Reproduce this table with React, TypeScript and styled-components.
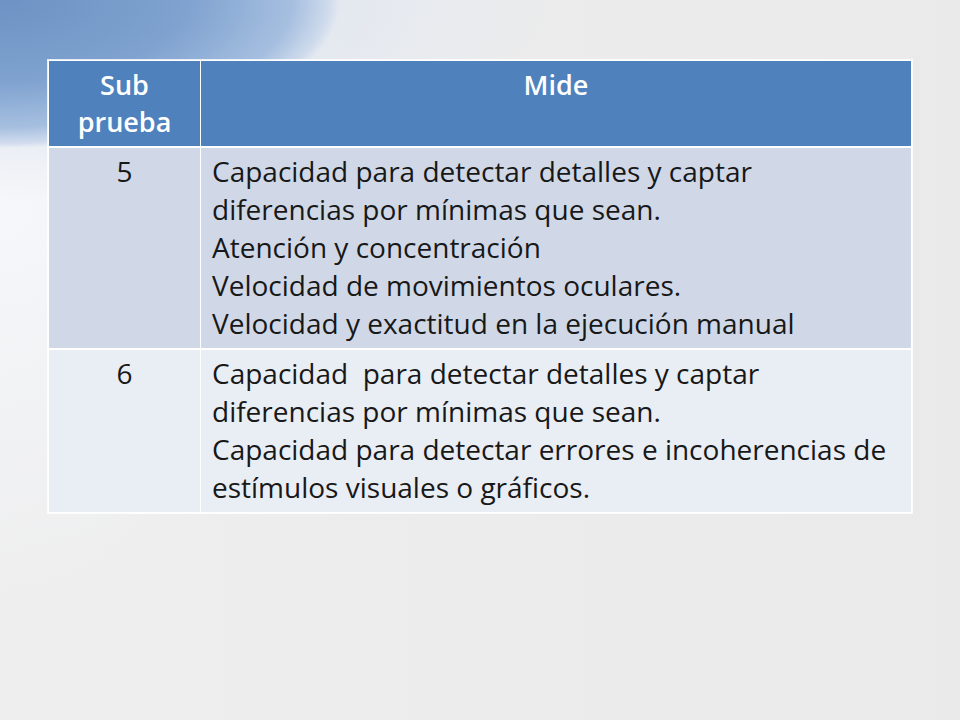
import React from "react";
import styled, { createGlobalStyle } from "styled-components";

const Global = createGlobalStyle`
  html, body { margin: 0; padding: 0; }
  body { width: 960px; height: 720px; overflow: hidden; }
`;

const Slide = styled.div`
  width: 960px;
  height: 720px;
  box-sizing: border-box;
  padding: 60px 48px 0 48px;
  font-family: "Open Sans", Lato, sans-serif;
  background:
    radial-gradient(ellipse 340px 148px at 0 0, #6d93c4 0%, #7fa2cf 55%, #a6bfe0 86%, rgba(200,214,235,0.7) 97%, rgba(240,242,246,0) 100%),
    radial-gradient(ellipse 560px 200px at 0 0, rgba(210,222,238,0.9) 0%, rgba(226,232,242,0.6) 70%, rgba(236,236,236,0) 100%),
    radial-gradient(ellipse 360px 420px at 0 200px, #f6f7fa 0%, rgba(243,244,247,0.7) 50%, rgba(236,236,236,0) 100%),
    linear-gradient(90deg, #eeeeee 0%, #eaeaea 100%);
  background-color: #ececec;
`;

const Table = styled.table`
  width: 864px;
  border-collapse: collapse;
  table-layout: fixed;
  outline: 1px solid rgba(255,255,255,0.8);
`;

const FirstCol = styled.col`
  width: 152px;
`;

const HeadCell = styled.th`
  background: #4f81bd;
  color: #ffffff;
  font-weight: 600;
  font-size: 27px;
  line-height: 37px;
  text-align: center;
  vertical-align: top;
  padding: 5px 4px 6px;
  height: 74px;
  border: 1px solid #ffffff;
`;

const Row = styled.tr<{ $alt?: boolean }>`
  background: ${(p) => (p.$alt ? "#e9edf4" : "#d0d8e8")};
`;

const NumCell = styled.td`
  font-size: 28px;
  line-height: 38px;
  color: #181818;
  text-align: center;
  vertical-align: top;
  padding: 4px 8px 6px;
  border: 1px solid #ffffff;
  border-top-width: 2px;
`;

const TextCell = styled.td`
  font-size: 28px;
  line-height: 38px;
  color: #181818;
  text-align: left;
  vertical-align: top;
  padding: 4px 4px 6px 11px;
  border: 1px solid #ffffff;
  border-top-width: 2px;
`;

const Line = styled.div`
  white-space: nowrap;
`;

const rows = [
  {
    n: "5",
    lines: [
      "Capacidad para detectar detalles y captar",
      "diferencias por mínimas que sean.",
      "Atención y concentración",
      "Velocidad de movimientos oculares.",
      "Velocidad y exactitud en la ejecución manual",
    ],
  },
  {
    n: "6",
    lines: [
      "Capacidad\u00a0 para detectar detalles y captar",
      "diferencias por mínimas que sean.",
      "Capacidad para detectar errores e incoherencias de",
      "estímulos visuales o gráficos.",
    ],
  },
];

export default function App() {
  return (
    <>
      <Global />
      <Slide>
        <Table>
          <colgroup>
            <FirstCol />
            <col />
          </colgroup>
          <thead>
            <tr>
              <HeadCell>
                Sub
                <br />
                prueba
              </HeadCell>
              <HeadCell>Mide</HeadCell>
            </tr>
          </thead>
          <tbody>
            {rows.map((r, i) => (
              <Row key={r.n} $alt={i % 2 === 1}>
                <NumCell>{r.n}</NumCell>
                <TextCell>
                  {r.lines.map((l) => (
                    <Line key={l}>{l}</Line>
                  ))}
                </TextCell>
              </Row>
            ))}
          </tbody>
        </Table>
      </Slide>
    </>
  );
}
